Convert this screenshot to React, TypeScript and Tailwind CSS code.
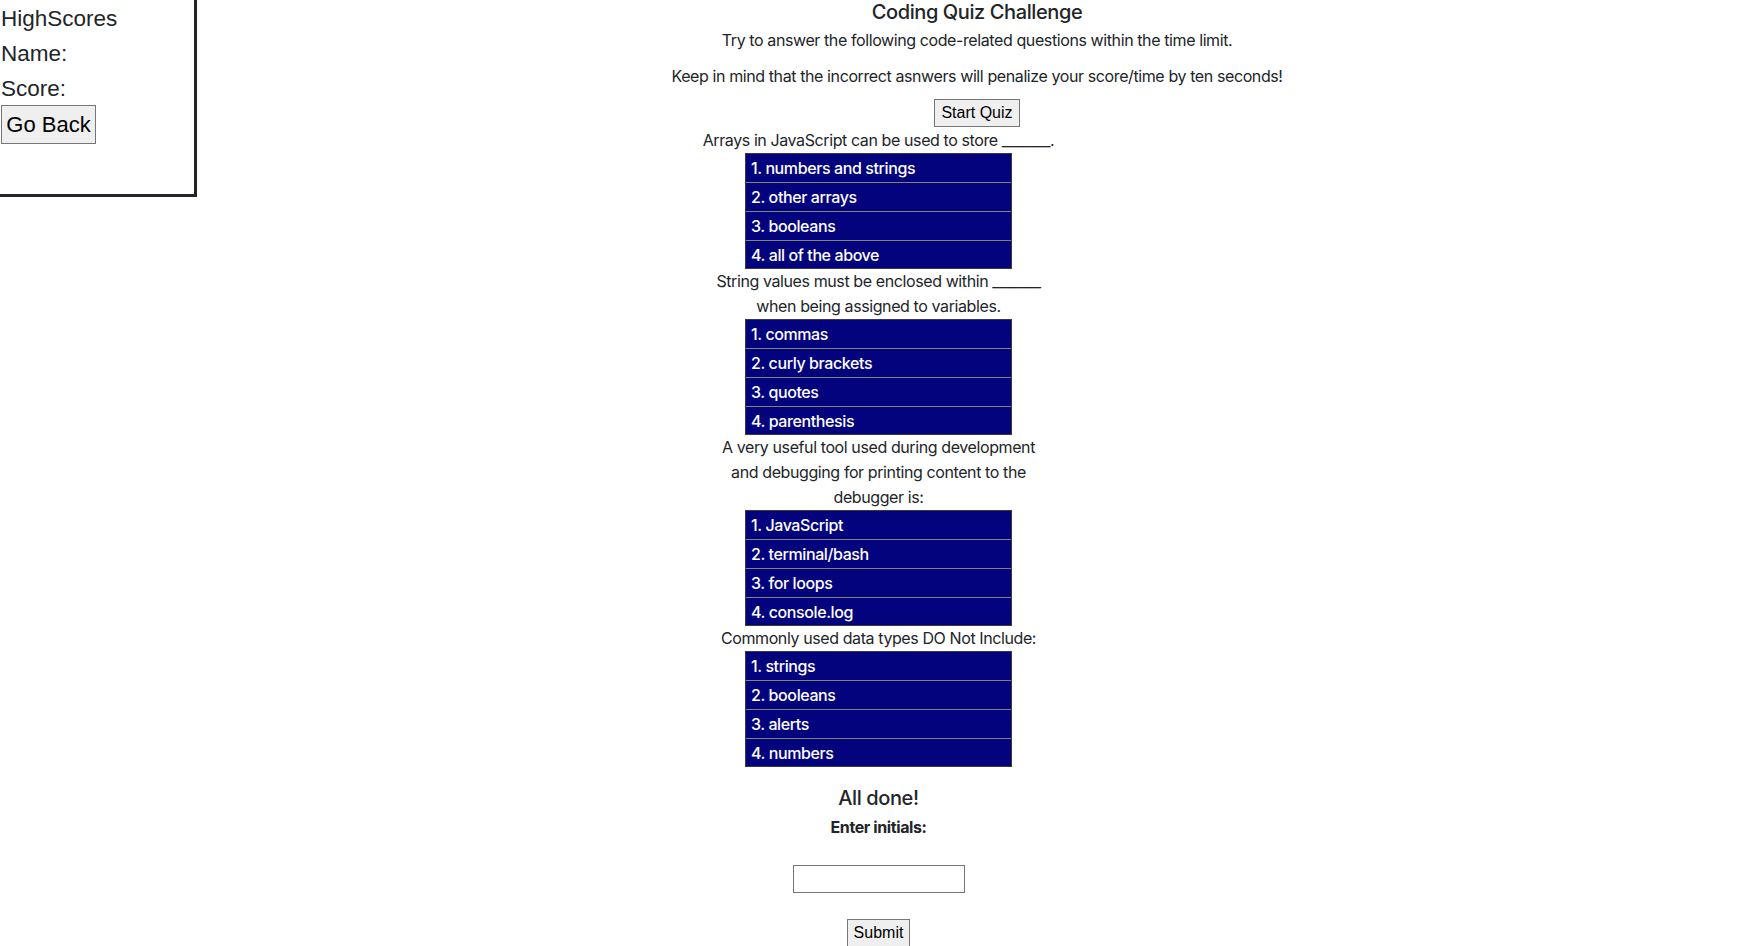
import React from "react";

const questions: { lines: string[]; choices: string[] }[] = [
  {
    lines: ["Arrays in JavaScript can be used to store _______."],
    choices: ["1. numbers and strings", "2. other arrays", "3. booleans", "4. all of the above"],
  },
  {
    lines: ["String values must be enclosed within _______", "when being assigned to variables."],
    choices: ["1. commas", "2. curly brackets", "3. quotes", "4. parenthesis"],
  },
  {
    lines: [
      "A very useful tool used during development",
      "and debugging for printing content to the",
      "debugger is:",
    ],
    choices: ["1. JavaScript", "2. terminal/bash", "3. for loops", "4. console.log"],
  },
  {
    lines: ["Commonly used data types DO Not Include:"],
    choices: ["1. strings", "2. booleans", "3. alerts", "4. numbers"],
  },
];

export default function App() {
  return (
    <div
      className="relative min-h-screen bg-white text-[#212529] text-[16px] tracking-[-0.025em]"
      style={{ fontFamily: 'Inter, "Noto Sans", sans-serif' }}
    >
      <div className="absolute left-0 top-0 w-[197px] h-[197px] border-r-[3px] border-b-[3px] border-[#212529] font-['Liberation_Sans',Arial,sans-serif] text-[22.5px] leading-[35px] pl-[1px] tracking-normal">
        <div className="pt-[1px]">HighScores</div>
        <div>Name:</div>
        <div className="-mb-[1px]">Score:</div>
        <button className="block w-[95px] h-[39px] bg-[#efefef] border border-[#767676] text-black text-[22px] leading-none">
          Go Back
        </button>
      </div>

      <header className="ml-[197px] flex flex-col items-center text-center">
        <h1 className="text-[20px] leading-[24px] font-medium">Coding Quiz Challenge</h1>
        <p className="mt-[4px] leading-[24px]">
          Try to answer the following code-related questions within the time limit.
        </p>
        <p className="mt-[12px] leading-[24px]">
          Keep in mind that the incorrect asnwers will penalize your score/time by ten seconds!
        </p>
        <button className="mt-[11px] h-[28px] px-[6px] bg-[#efefef] border border-[#767676] text-black font-['Liberation_Sans',Arial,sans-serif] text-[16px] leading-none tracking-normal">
          Start Quiz
        </button>
      </header>

      <main className="mt-[1px] flex flex-col items-center">
        {questions.map((q, i) => (
          <section key={i} className="flex flex-col items-center">
            <div className="text-center leading-[25px] whitespace-nowrap">
              {q.lines.map((l, j) => (
                <div key={j}>{l}</div>
              ))}
            </div>
            <ul className="w-[267px] bg-[#03037e] border border-[#3a3a3a]">
              {q.choices.map((c, k) => (
                <li
                  key={k}
                  className={
                    "px-[5px] flex items-center text-white font-medium text-[16px] " +
                    (k < 3 ? "h-[29px] border-b border-[#85856f]" : "h-[27px]")
                  }
                >
                  {c}
                </li>
              ))}
            </ul>
          </section>
        ))}

        <h2 className="mt-[19px] text-[20px] leading-[24px] font-medium">All done!</h2>
        <label className="mt-[5px] font-bold leading-[24px]">Enter initials:</label>
        <input
          type="text"
          className="mt-[26px] w-[172px] h-[28px] border border-[#767676] bg-white"
        />
        <button className="mt-[26px] h-[28px] px-[6px] bg-[#efefef] border border-[#767676] text-black font-['Liberation_Sans',Arial,sans-serif] text-[16px] leading-none tracking-normal">
          Submit
        </button>
      </main>
    </div>
  );
}
